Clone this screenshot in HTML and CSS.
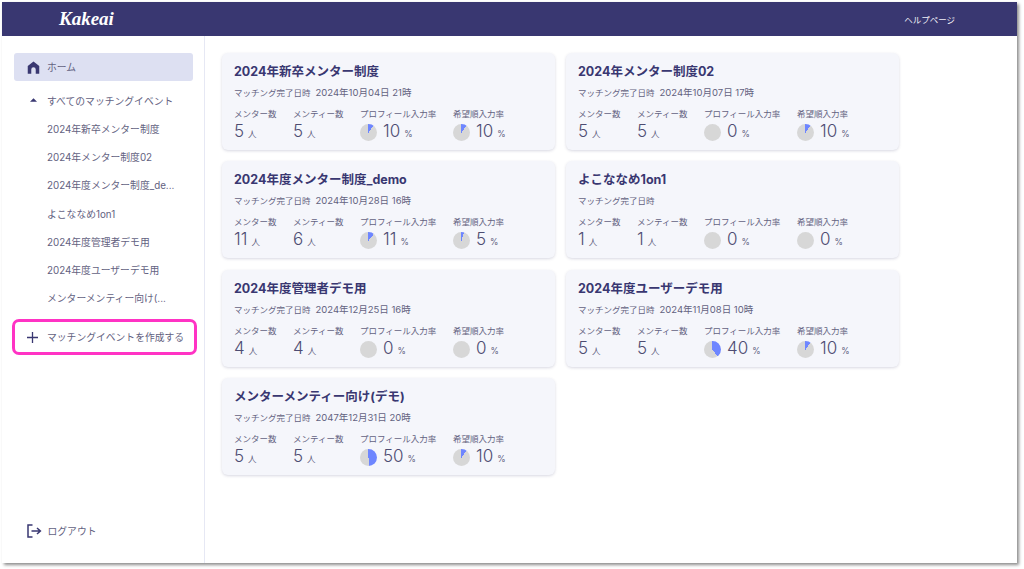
FILE: index.html
```html
<!DOCTYPE html>
<html lang="ja">
<head>
  <meta charset="UTF-8" />
  <title>Kakeai</title>
  <link rel="stylesheet" href="styles.css">
</head>
<body>

<div class="app">
  <header class="topbar">
    <div class="logo">Kakeai</div>
    <a class="help">ヘルプページ</a>
  </header>

  <div class="main">
    <nav class="side">
      <a class="home">
        <svg class="ic" viewBox="0 0 14 14"><path d="M7 .6 13.2 5.4V13.6H9.4V9.2A2.4 2.4 0 0 0 4.6 9.2V13.6H.8V5.4Z" fill="#393771"/></svg>
        <span>ホーム</span>
      </a>
      <div class="all">
        <svg class="caret" viewBox="0 0 8 4"><path d="M4 0 8 4H0Z" fill="#393771"/></svg>
        <span>すべてのマッチングイベント</span>
      </div>
      <a class="item">2024年新卒メンター制度</a>
      <a class="item">2024年メンター制度02</a>
      <a class="item">2024年度メンター制度_de...</a>
      <a class="item">よこななめ1on1</a>
      <a class="item">2024年度管理者デモ用</a>
      <a class="item">2024年度ユーザーデモ用</a>
      <a class="item">メンターメンティー向け(...</a>
      <a class="create">
        <svg class="plus" viewBox="0 0 11 11"><path d="M5.5 0V11M0 5.5H11" stroke="#393771" stroke-width="1.3" fill="none"/></svg>
        <span>マッチングイベントを作成する</span>
      </a>
      <a class="logout">
        <svg class="ic-out" viewBox="0 0 15 14"><path d="M5.5 1H1V13H5.5" stroke="#393771" stroke-width="1.5" fill="none"/><path d="M4.5 7H13M10 4l3.4 3L10 10" stroke="#393771" stroke-width="1.5" fill="none"/></svg>
        <span>ログアウト</span>
      </a>
    </nav>

    <section class="cards">
      <div class="card">
        <h2>2024年新卒メンター制度</h2>
        <p class="date"><span>マッチング完了日時</span><span>2024年10月04日 21時</span></p>
        <div class="stats">
          <div><label>メンター数</label><div class="val">5<small>人</small></div></div>
          <div><label>メンティー数</label><div class="val">5<small>人</small></div></div>
          <div><label>プロフィール入力率</label><div class="val"><i class="pie" style="--p:10%"></i>10<small>%</small></div></div>
          <div><label>希望順入力率</label><div class="val"><i class="pie" style="--p:10%"></i>10<small>%</small></div></div>
        </div>
      </div>
      <div class="card">
        <h2>2024年メンター制度02</h2>
        <p class="date"><span>マッチング完了日時</span><span>2024年10月07日 17時</span></p>
        <div class="stats">
          <div><label>メンター数</label><div class="val">5<small>人</small></div></div>
          <div><label>メンティー数</label><div class="val">5<small>人</small></div></div>
          <div><label>プロフィール入力率</label><div class="val"><i class="pie" style="--p:0%"></i>0<small>%</small></div></div>
          <div><label>希望順入力率</label><div class="val"><i class="pie" style="--p:10%"></i>10<small>%</small></div></div>
        </div>
      </div>
      <div class="card">
        <h2>2024年度メンター制度_demo</h2>
        <p class="date"><span>マッチング完了日時</span><span>2024年10月28日 16時</span></p>
        <div class="stats">
          <div><label>メンター数</label><div class="val">11<small>人</small></div></div>
          <div><label>メンティー数</label><div class="val">6<small>人</small></div></div>
          <div><label>プロフィール入力率</label><div class="val"><i class="pie" style="--p:11%"></i>11<small>%</small></div></div>
          <div><label>希望順入力率</label><div class="val"><i class="pie" style="--p:5%"></i>5<small>%</small></div></div>
        </div>
      </div>
      <div class="card">
        <h2>よこななめ1on1</h2>
        <p class="date"><span>マッチング完了日時</span></p>
        <div class="stats">
          <div><label>メンター数</label><div class="val">1<small>人</small></div></div>
          <div><label>メンティー数</label><div class="val">1<small>人</small></div></div>
          <div><label>プロフィール入力率</label><div class="val"><i class="pie" style="--p:0%"></i>0<small>%</small></div></div>
          <div><label>希望順入力率</label><div class="val"><i class="pie" style="--p:0%"></i>0<small>%</small></div></div>
        </div>
      </div>
      <div class="card">
        <h2>2024年度管理者デモ用</h2>
        <p class="date"><span>マッチング完了日時</span><span>2024年12月25日 16時</span></p>
        <div class="stats">
          <div><label>メンター数</label><div class="val">4<small>人</small></div></div>
          <div><label>メンティー数</label><div class="val">4<small>人</small></div></div>
          <div><label>プロフィール入力率</label><div class="val"><i class="pie" style="--p:0%"></i>0<small>%</small></div></div>
          <div><label>希望順入力率</label><div class="val"><i class="pie" style="--p:0%"></i>0<small>%</small></div></div>
        </div>
      </div>
      <div class="card">
        <h2>2024年度ユーザーデモ用</h2>
        <p class="date"><span>マッチング完了日時</span><span>2024年11月08日 10時</span></p>
        <div class="stats">
          <div><label>メンター数</label><div class="val">5<small>人</small></div></div>
          <div><label>メンティー数</label><div class="val">5<small>人</small></div></div>
          <div><label>プロフィール入力率</label><div class="val"><i class="pie" style="--p:40%"></i>40<small>%</small></div></div>
          <div><label>希望順入力率</label><div class="val"><i class="pie" style="--p:10%"></i>10<small>%</small></div></div>
        </div>
      </div>
      <div class="card">
        <h2>メンターメンティー向け(デモ)</h2>
        <p class="date"><span>マッチング完了日時</span><span>2047年12月31日 20時</span></p>
        <div class="stats">
          <div><label>メンター数</label><div class="val">5<small>人</small></div></div>
          <div><label>メンティー数</label><div class="val">5<small>人</small></div></div>
          <div><label>プロフィール入力率</label><div class="val"><i class="pie" style="--p:50%"></i>50<small>%</small></div></div>
          <div><label>希望順入力率</label><div class="val"><i class="pie" style="--p:10%"></i>10<small>%</small></div></div>
        </div>
      </div>
    </section>
  </div>
</div>

</body>
</html>
```
FILE: styles.css
```css
* { margin: 0; padding: 0; box-sizing: border-box; }

body {
  font-family: Inter, 'Noto Sans CJK JP', sans-serif;
  background: #fff;
  color: #63627f;
  width: 1024px;
  height: 569px;
  overflow: hidden;
  padding: 2px 0 0 2px;
}

.app {
  width: 1015px;
  height: 561px;
  background: #fff;
  box-shadow: 2px 2px 3px rgba(0,0,0,0.45);
  display: flex;
  flex-direction: column;
}

.topbar {
  height: 34px;
  background: #393771;
  color: #fff;
  display: flex;
  align-items: center;
  justify-content: space-between;
  padding: 0 62px 0 57px;
}

.logo {
  font-family: 'Liberation Serif', serif;
  font-style: italic;
  font-weight: 700;
  font-size: 19px;
}

.help {
  font-size: 8.5px;
  color: #f1f1f7;
}

.main {
  flex: 1;
  display: flex;
}

/* sidebar */
.side {
  width: 203px;
  border-right: 1px solid #e6e8f4;
  padding: 17px 10px 25px 10px;
  display: flex;
  flex-direction: column;
  font-size: 9.8px;
}

.home {
  height: 28px;
  margin: 0 1px 0 2px;
  background: #dde0f2;
  border-radius: 3px;
  display: flex;
  align-items: center;
  padding-left: 13px;
  gap: 7px;
}

.ic { width: 13px; height: 13px; }

.all {
  height: 28px;
  margin-top: 6px;
  display: flex;
  align-items: center;
  padding-left: 18px;
  gap: 10px;
}

.caret { width: 7px; height: 4px; margin-top: -2px; }

.item {
  height: 28.2px;
  display: flex;
  align-items: center;
  padding-left: 35px;
}

.create {
  height: 36px;
  margin: 7px -3px 0 0;
  border: 3px solid #ff33c4;
  border-radius: 7px;
  display: flex;
  align-items: center;
  padding-left: 12px;
  gap: 9px;
}

.plus { width: 11px; height: 11px; }

.logout {
  margin-top: auto;
  display: flex;
  align-items: center;
  padding-left: 15px;
  gap: 5.5px;
}

.ic-out { width: 15px; height: 14px; }

/* cards */
.cards {
  padding: 17px 0 0 17px;
  display: grid;
  grid-template-columns: 333px 333px;
  grid-auto-rows: 97px;
  gap: 11.3px 11px;
}

.card {
  background: #f5f6fb;
  border-radius: 6px;
  padding: 11px 12px 0 12px;
  box-shadow: 0 1px 3px rgba(60,60,110,0.2);
}

.card h2 {
  font-size: 12.5px;
  line-height: 16px;
  font-weight: 700;
  color: #393771;
}

.date {
  margin-top: 7px;
  font-size: 8.5px;
  line-height: 12px;
  height: 12px;
  display: flex;
  gap: 5px;
}

.date span + span { font-size: 9.5px; }

.stats {
  margin-top: 10px;
  display: grid;
  grid-template-columns: 59px 67px 93px 1fr;
}

.stats label {
  display: block;
  font-size: 8.5px;
  line-height: 11px;
}

.val {
  display: flex;
  align-items: baseline;
  font-size: 17px;
  font-weight: 300;
  line-height: 20px;
  margin-top: 1px;
  color: #4d4c72;
}

.val small {
  font-size: 8.5px;
  font-weight: 400;
  margin-left: 4px;
  color: #5d5c7d;
}

.pie {
  width: 17px;
  height: 17px;
  border-radius: 50%;
  margin-right: 6px;
  align-self: center;
  background: conic-gradient(#6e86ff var(--p), #d7d7d7 0);
}
```
